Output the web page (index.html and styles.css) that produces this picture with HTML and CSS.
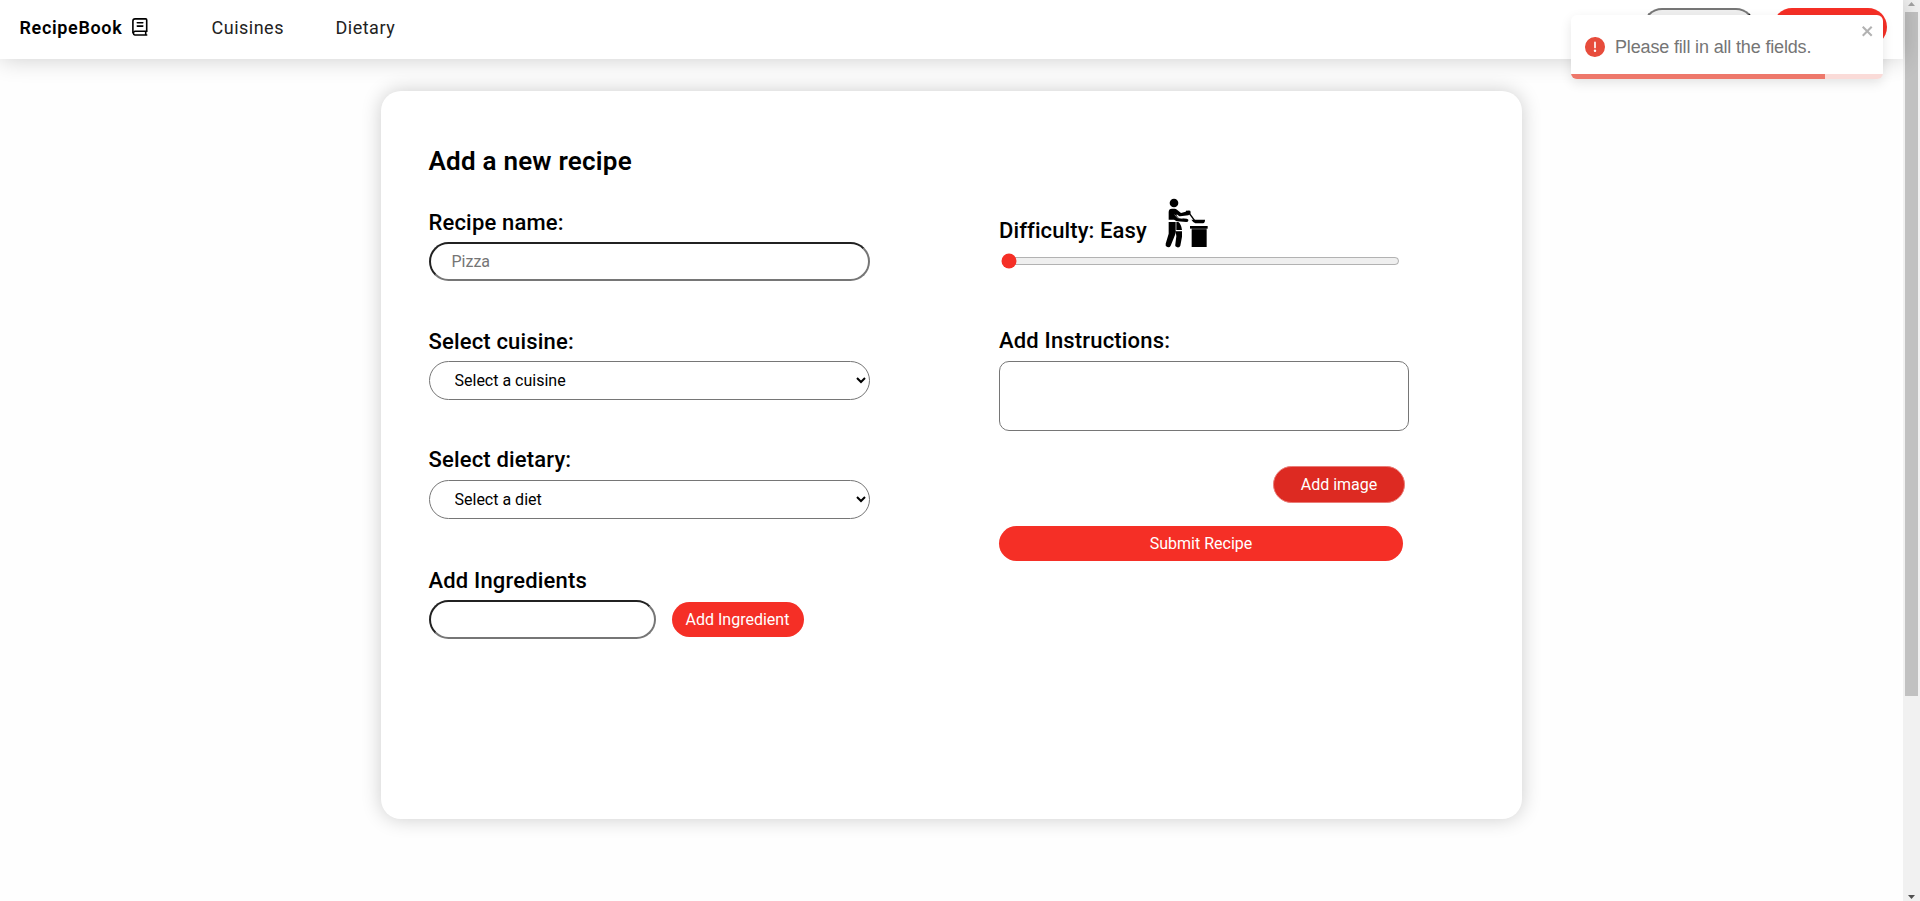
FILE: index.html
```html
<!DOCTYPE html>
<html lang="en">
<head>
<meta charset="utf-8">
<title>RecipeBook</title>
<link rel="stylesheet" href="styles.css">
</head>
<body>
<div class="window">
  <div class="page">
    <nav class="navbar">
      <a class="brand">RecipeBook
        <svg class="brand-icon" width="16" height="18" viewBox="0 0 16 18" fill="none" stroke="#000" stroke-width="1.6" stroke-linecap="round" stroke-linejoin="round"><path d="M14.7 13.3V1.9a1 1 0 0 0-1-1H3.1A2.2 2.2 0 0 0 .9 3.100v11.600"/><path d="M14.700 13.300H2.900a1.900 1.900 0 0 0 0 3.700h11.800M13.700 13.600v3.200M5.300 4.700h5.500M5.300 8.100h5.500"/></svg>
      </a>
      <a class="nav-link cuisines">Cuisines</a>
      <a class="nav-link dietary">Dietary</a>
      <div class="nav-actions">
        <button class="login"></button>
        <button class="signup"></button>
      </div>
    </nav>
    <main class="card">
      <section class="col left">
        <h1 class="title">Add a new recipe</h1>
        <div class="field name">
          <label class="label">Recipe name:</label>
          <input class="input" type="text" placeholder="Pizza">
        </div>
        <div class="field cuisine">
          <label class="label">Select cuisine:</label>
          <select class="select"><option>Select a cuisine</option></select>
        </div>
        <div class="field diet">
          <label class="label">Select dietary:</label>
          <select class="select"><option>Select a diet</option></select>
        </div>
        <div class="field">
          <label class="label">Add Ingredients</label>
          <div class="ingredient-row">
            <input class="input short" type="text">
            <button class="btn add-ingredient">Add Ingredient</button>
          </div>
        </div>
      </section>
      <section class="col right">
        <div class="difficulty">
          <label class="label">Difficulty: Easy</label>
          <svg class="cook" width="46" height="50" viewBox="45 24 138 150">
            <circle cx="78" cy="39" r="13"/>
            <path d="M62 89V66q0-10 10-10h8q4 0 7 3l12 10 14-4q1-4 6-3 9-1 9 4l-1 6-6 4-24 3q-3 0-5-2l-6-4v4l7 7 23 2q7 1 5 6-1 4-6 4l-27-2q-4 0-7-3l-3-2z"/>
            <path d="M80 74l8 9 16 3" fill="none" stroke="#fff" stroke-width="1.500"/>
            <path d="M121 66l19 26" fill="none" stroke="#000" stroke-width="4"/>
            <path d="M130 89h41q0 10-6 11h-23q-5-1-12-11z"/>
            <path d="M126 108h53v8h-3v55h-45v-55h-5z"/>
            <path d="M126 117h53" stroke="#fff" stroke-width="1"/>
            <path d="M62 96h21v29q0 5-2 10l-13 32q-3 6-10 4-7-3-5-10l9-30zM85 96h6q9 7 11 24h-17zM83 124h19v16l-5 27q-2 6-9 5-8-2-6-9l3-24z"/>
          </svg>
        </div>
        <input class="slider" type="range" min="0" max="2" value="0">
        <label class="label instructions-label">Add Instructions:</label>
        <textarea class="textarea"></textarea>
        <button class="btn add-image">Add image</button>
        <button class="btn submit">Submit Recipe</button>
      </section>
    </main>
    <div class="toast">
      <div class="toast-body">
        <svg width="20" height="20" viewBox="0 0 24 24" fill="#e74c3c"><path d="M11.983 0a12.206 12.206 0 0 0-8.510 3.653A11.800 11.800 0 0 0 0 12.207 11.779 11.779 0 0 0 11.800 24h.214A12.111 12.111 0 0 0 24 11.791 11.766 11.766 0 0 0 11.983 0zM10.500 16.542a1.476 1.476 0 0 1 1.449-1.530h.027a1.527 1.527 0 0 1 1.523 1.470 1.475 1.475 0 0 1-1.449 1.530h-.027a1.529 1.529 0 0 1-1.523-1.470zM11 12.500v-6a1 1 0 0 1 2 0v6a1 1 0 1 1-2 0z"/></svg>
        <span class="toast-text">Please fill in all the fields.</span>
        <svg class="toast-close" width="14" height="16" viewBox="0 0 14 16" fill="#b2b2b2"><path fill-rule="evenodd" d="M7.710 8.230l3.750 3.750-1.480 1.480-3.750-3.750-3.750 3.750L1 11.980l3.750-3.750L1 4.480 2.480 3l3.750 3.750L9.980 3l1.480 1.480-3.750 3.750z"/></svg>
      </div>
      <div class="progress"><div class="progress-fill"></div></div>
    </div>
  </div>
  <div class="scrollbar">
    <svg width="17" height="12" viewBox="0 0 17 12"><path d="M5 6l3.500-4L12 6z" fill="#a3a3a3"/></svg>
    <div class="thumb"></div>
    <svg class="down" width="17" height="12" viewBox="0 0 17 12"><path d="M5 6h7l-3.500 4z" fill="#505050"/></svg>
  </div>
</div>
</body>
</html>
```
FILE: styles.css
```css
* { box-sizing: border-box; }
body { margin: 0; font-family: Roboto, "Liberation Sans", sans-serif; background: #fefefe; color: #000; overflow: hidden; }
button, input, select, textarea { font-family: inherit; font-size: 16px; margin: 0; }
.window { display: flex; height: 901px; }
.page { position: relative; width: 1903px; }
.navbar { display: flex; height: 59px; padding: 8px 16px 0 19.5px; background: #fff; box-shadow: 0 0 25px rgba(0, 0, 0, .2); }
.brand { display: flex; gap: 10px; width: 192px; padding-top: 9px; font-size: 18px; font-weight: 600; line-height: 21px; letter-spacing: .65px; }
.brand-icon { margin-top: 1px; }
.nav-link { width: 124px; padding-top: 9px; font-size: 18px; font-weight: 400; color: #222; line-height: 21px; letter-spacing: .5px; }
.nav-actions { display: flex; gap: 18px; margin-left: auto; }
.login { width: 112px; height: 38px; border: 2px outset #767676; border-radius: 20px; background: #efefef; }
.signup { width: 114px; height: 38px; border: 0; border-radius: 20px; background: #f52f26; }
.card { display: flex; width: 1141.500px; height: 728px; margin: 32px 0 0 380.500px; padding: 48px; border-radius: 20px; background: #fff; box-shadow: 0 0 20px rgba(0, 0, 0, .2); }
.col { display: flex; flex-direction: column; }
.left { width: 570.500px; }
.title { margin: 6px 0 33px; font-size: 26px; font-weight: 600; line-height: 32px; letter-spacing: .23px; }
.label { font-size: 22px; font-weight: 500; line-height: 26px; letter-spacing: .17px; }
.field { display: flex; flex-direction: column; align-items: flex-start; gap: 6px; }
.name { margin-bottom: 48px; }
.cuisine { margin-bottom: 47px; }
.diet { gap: 7px; margin-bottom: 49px; }
.input { width: 441px; height: 39px; padding: 0 21px; border: 2px inset #767676; border-radius: 20px; background: #fff; }
.input::placeholder { color: #757575; }
.input.short { width: 227px; }
.select { width: 441px; height: 39px; padding: 0 0 0 21px; border: 1px solid #767676; border-radius: 20px; background: #fff; color: #000; }
.ingredient-row { display: flex; align-items: center; gap: 16px; }
.btn { height: 35px; padding: 0; border: 0; border-radius: 20px; background: #f52f26; color: #fff; }
.add-ingredient { width: 132px; }
.right { align-items: flex-start; width: 440px; padding-top: 59px; }
.difficulty { display: flex; height: 50px; gap: 16px; }
.difficulty .label { padding-top: 20px; letter-spacing: .1px; }
.slider { width: 399px; height: 16px; margin: 5px 2px 0; accent-color: #f52f26; }
.instructions-label { margin-top: 59px; }
.textarea { width: 410px; height: 70px; margin-top: 7px; border: 1px solid #767676; border-radius: 10px; resize: none; }
.add-image { width: 132px; height: 37px; margin: 35px 0 0 274px; border: 1px solid #ea7c77; background: #dd2a22; }
.submit { width: 404px; margin-top: 23px; }
.toast { position: absolute; top: 15px; left: 1571px; width: 312px; height: 64px; border-radius: 6px; overflow: hidden; background: #fff; }
.page::after { content: ""; position: absolute; top: 15px; left: 1571px; width: 312px; height: 64px; border-radius: 6px; pointer-events: none; box-shadow: 0 4px 12px rgba(0, 0, 0, .1); }
.toast-body { display: flex; height: 59px; padding: 22px 8px 0 14px; }
.toast-text { margin-left: 10px; color: #757575; font: 18px/20px "Liberation Sans", sans-serif; letter-spacing: -.16px; }
.toast-close { margin: -14px 0 0 auto; }
.progress { height: 5px; background: #fadbd8; }
.progress-fill { width: 254px; height: 5px; background: #ee786b; }
.scrollbar { display: flex; flex-direction: column; width: 17px; background: #f1f1f1; }
.thumb { width: 13px; height: 684px; margin-left: 2px; background: #c1c1c1; }
.down { margin-top: auto; }
```
